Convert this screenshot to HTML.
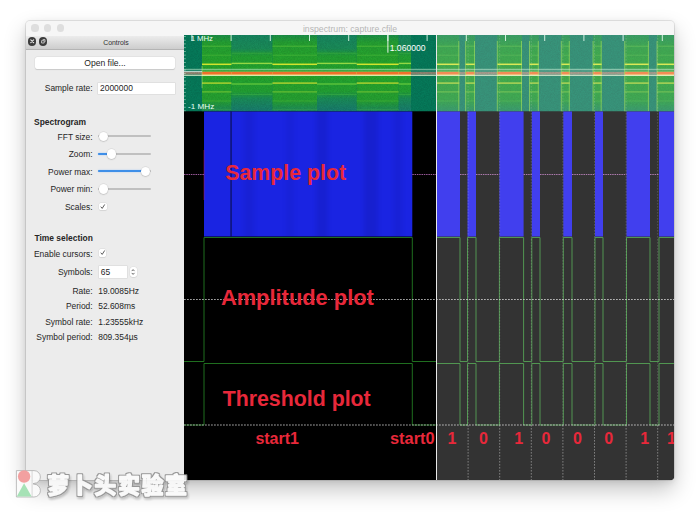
<!DOCTYPE html>
<html lang="zh"><head><meta charset="utf-8"><title>inspectrum: capture.cfile</title>
<style>
html,body{margin:0;padding:0;background:#fff;}
body{width:700px;height:512px;position:relative;overflow:hidden;font-family:"Liberation Sans","Noto Sans CJK SC",sans-serif;color:#262626;}
.win{position:absolute;left:26px;top:21px;width:648px;height:459px;border-radius:4px;background:#ececec;
 box-shadow:0 0 0 1px rgba(0,0,0,0.09),0 10px 22px rgba(0,0,0,0.23),0 2px 7px rgba(0,0,0,0.09);overflow:hidden;}
.tbar{position:absolute;left:0;top:0;width:648px;height:14.5px;background:#f6f6f6;border-bottom:0.5px solid #dcdcdc;}
.tl{position:absolute;top:3.4px;width:7.2px;height:7.2px;border-radius:50%;background:#dedede;}
.title{position:absolute;left:0;width:648px;top:2.7px;text-align:center;font-size:8.7px;line-height:10px;color:#b6b6b6;box-sizing:border-box;}
.dock{position:absolute;left:0;top:14.5px;width:158px;height:13.5px;background:linear-gradient(#ececec,#cdcdcd);border-bottom:0.5px solid #b4b4b4;}
.dock .t{position:absolute;left:0;width:180px;text-align:center;top:3.2px;font-size:6.9px;color:#303030;}
.db{position:absolute;top:1.9px;width:8.4px;height:8.4px;border-radius:50%;background:#3c3c3c;}
.plot{position:absolute;left:158px;top:14px;}
.lab{position:absolute;font-size:8.45px;white-space:nowrap;line-height:10px;}
.r{text-align:right;width:80px;left:-13.4px;}
.b{font-weight:bold;}
.btn{position:absolute;background:#fff;border-radius:2px;box-shadow:0 0 0 0.5px rgba(0,0,0,0.05),0 0.5px 1px rgba(0,0,0,0.13);}
.inp{position:absolute;background:#fff;box-shadow:0 0 0 0.5px rgba(0,0,0,0.10);}
.trk{position:absolute;left:72px;width:52.7px;height:2px;background:#c0c0c0;border-radius:1px;}
.trkb{position:absolute;left:72px;height:2px;background:#3f8fe8;border-radius:1px;box-shadow:0 0 1.5px rgba(80,160,255,0.6);}
.knob{position:absolute;width:9.4px;height:9.4px;border-radius:50%;background:#fff;box-shadow:0 0 0 0.4px rgba(0,0,0,0.08),0 0.5px 1.4px rgba(0,0,0,0.22);}
.chk{position:absolute;width:7.6px;height:7.6px;background:#fff;border-radius:1.6px;box-shadow:0 0 0 0.4px rgba(0,0,0,0.07),0 0.5px 1px rgba(0,0,0,0.12);}
.wm{position:absolute;left:0;top:460px;}
</style></head><body>
<div class="win">
<div class="tbar"><div class="tl" style="left:5.4px"></div><div class="tl" style="left:18px"></div><div class="tl" style="left:30.7px"></div><div class="title">inspectrum: capture.cfile</div></div>
<div class="dock"><div class="db" style="left:1.7px"><svg width="8.4" height="8.4" viewBox="0 0 78 78" style="position:absolute;left:0;top:0"><path d="M26 26 L52 52 M52 26 L26 52" stroke="#e6e6e6" stroke-width="11" stroke-linecap="round"/></svg></div><div class="db" style="left:13.1px"><svg width="8.4" height="8.4" viewBox="0 0 78 78" style="position:absolute;left:0;top:0"><path d="M24 34 h24 v22 h-24 z M34 24 h22 v22" fill="none" stroke="#e6e6e6" stroke-width="7"/></svg></div><div class="t">Controls</div></div>
<div class="btn" style="left:8.6px;top:35.8px;width:140.8px;height:12px;"></div>
<div class="lab " style="top:37.0px;left:8.6px;width:140.8px;text-align:center;font-size:8.6px;">Open file...</div>
<div class="lab r" style="top:62.3px;">Sample rate:</div>
<div class="inp" style="left:71.7px;top:61.6px;width:77.6px;height:11.4px;"></div>
<div class="lab " style="top:62.3px;left:74.0px;">2000000</div>
<div class="lab b" style="top:95.5px;left:8.0px;">Spectrogram</div>
<div class="lab r" style="top:110.6px;">FFT size:</div>
<div class="trk" style="top:114.2px"></div><div class="knob" style="left:72.5px;top:110.5px"></div>
<div class="lab r" style="top:128.3px;">Zoom:</div>
<div class="trk" style="top:131.9px"></div><div class="trkb" style="top:131.9px;width:13.6px"></div><div class="knob" style="left:80.9px;top:128.2px"></div>
<div class="lab r" style="top:145.8px;">Power max:</div>
<div class="trk" style="top:149.4px"></div><div class="trkb" style="top:149.4px;width:47.4px"></div><div class="knob" style="left:114.7px;top:145.7px"></div>
<div class="lab r" style="top:163.3px;">Power min:</div>
<div class="trk" style="top:166.9px"></div><div class="knob" style="left:72.5px;top:163.2px"></div>
<div class="lab r" style="top:181.0px;">Scales:</div>
<div class="chk" style="left:73.0px;top:181.6px;"><svg width="7.4" height="7.4" viewBox="0 0 74 74" style="position:absolute;left:0;top:0"><path d="M20 40 L32 54 L55 18" fill="none" stroke="#333" stroke-width="8" stroke-linecap="round" stroke-linejoin="round"/></svg></div>
<div class="lab b" style="top:212.3px;left:8.4px;">Time selection</div>
<div class="lab r" style="top:227.5px;">Enable cursors:</div>
<div class="chk" style="left:72.9px;top:228.4px;"><svg width="7.4" height="7.4" viewBox="0 0 74 74" style="position:absolute;left:0;top:0"><path d="M20 40 L32 54 L55 18" fill="none" stroke="#333" stroke-width="8" stroke-linecap="round" stroke-linejoin="round"/></svg></div>
<div class="lab r" style="top:246.0px;">Symbols:</div>
<div class="inp" style="left:72.7px;top:244.8px;width:28.6px;height:12px;"></div>
<div class="lab " style="top:246.0px;left:74.7px;">65</div>
<div class="btn" style="left:104.4px;top:246px;width:6.2px;height:10px;border-radius:2.5px"><svg width="6.2" height="10" viewBox="0 0 62 100" style="position:absolute;left:0;top:0"><path d="M20 38 L31 26 L42 38 M20 62 L31 74 L42 62" fill="none" stroke="#444" stroke-width="8" stroke-linecap="round" stroke-linejoin="round"/></svg></div>
<div class="lab r" style="top:265.0px;">Rate:</div>
<div class="lab " style="top:265.0px;left:72.2px;">19.0085Hz</div>
<div class="lab r" style="top:280.3px;">Period:</div>
<div class="lab " style="top:280.3px;left:72.2px;">52.608ms</div>
<div class="lab r" style="top:295.5px;">Symbol rate:</div>
<div class="lab " style="top:295.5px;left:72.2px;">1.23555kHz</div>
<div class="lab r" style="top:310.7px;">Symbol period:</div>
<div class="lab " style="top:310.7px;left:72.2px;">809.354µs</div>
<svg class="plot" width="490" height="445" viewBox="184 35 490 445">
<defs><filter id="bl" x="-50%" y="0" width="200%" height="100%"><feGaussianBlur stdDeviation="2.5 0"/></filter><linearGradient id="gb" x1="0" y1="0" x2="0" y2="1"><stop offset="0" stop-color="#1c9048"/><stop offset="0.1" stop-color="#25a032"/><stop offset="0.5" stop-color="#27a82a"/><stop offset="0.86" stop-color="#25a032"/><stop offset="1" stop-color="#1c8860"/></linearGradient><linearGradient id="gc" x1="0" y1="0" x2="0" y2="1"><stop offset="0" stop-color="#0a8840"/><stop offset="0.15" stop-color="#10952a"/><stop offset="0.5" stop-color="#149a20"/><stop offset="0.85" stop-color="#10952a"/><stop offset="1" stop-color="#0a8450"/></linearGradient><linearGradient id="gd" x1="0" y1="0" x2="0" y2="1"><stop offset="0" stop-color="#188660"/><stop offset="0.18" stop-color="#1a8c58"/><stop offset="0.27" stop-color="#22a034"/><stop offset="0.5" stop-color="#24a62c"/><stop offset="0.74" stop-color="#22a034"/><stop offset="0.83" stop-color="#1a8c58"/><stop offset="1" stop-color="#187c70"/></linearGradient><filter id="nz" x="0" y="0" width="100%" height="100%"><feTurbulence type="fractalNoise" baseFrequency="1.3" numOctaves="2" seed="3" result="t"/><feColorMatrix type="matrix" values="0 0 0 0 0  0 0 0 0 0  0 0 0 0 0  0.9 0 0 0 -0.25"/><feComposite in2="SourceGraphic" operator="in"/></filter></defs>
<rect x="184" y="35" width="490" height="445" fill="#000"/>
<rect x="184" y="35" width="490" height="76.5" fill="#067a5a"/>
<rect x="202" y="35" width="29.5" height="76.5" fill="url(#gb)"/>
<rect x="231.5" y="35" width="40.89999999999998" height="76.5" fill="url(#gd)"/>
<rect x="272.4" y="35" width="44.60000000000002" height="76.5" fill="url(#gb)"/>
<rect x="317" y="35" width="39.69999999999999" height="76.5" fill="url(#gd)"/>
<rect x="356.7" y="35" width="42.0" height="76.5" fill="url(#gb)"/>
<rect x="398.7" y="35" width="12.300000000000011" height="76.5" fill="url(#gd)"/>
<rect x="184" y="71.9" width="490" height="2.7" fill="#b08878" opacity="0.8"/>
<rect x="436.5" y="35" width="22.80000000000001" height="76.5" fill="url(#gc)"/>
<rect x="465.6" y="35" width="9.399999999999977" height="76.5" fill="url(#gc)"/>
<rect x="497.3" y="35" width="24.69999999999999" height="76.5" fill="url(#gc)"/>
<rect x="529.5" y="35" width="9.299999999999955" height="76.5" fill="url(#gc)"/>
<rect x="561.3" y="35" width="8.5" height="76.5" fill="url(#gc)"/>
<rect x="593" y="35" width="8.700000000000045" height="76.5" fill="url(#gc)"/>
<rect x="624.7" y="35" width="24.199999999999932" height="76.5" fill="url(#gc)"/>
<rect x="657" y="35" width="17" height="76.5" fill="url(#gc)"/>
<rect x="184" y="35" width="490" height="76.5" fill="#002030" filter="url(#nz)" opacity="0.22"/>
<rect x="202" y="45.70" width="29.5" height="1.0" fill="#5cc23c" opacity="0.7"/>
<rect x="202" y="54.70" width="29.5" height="1.0" fill="#4fba3a" opacity="0.6"/>
<rect x="202" y="63.55" width="29.5" height="1.5" fill="#d2e42e" opacity="1"/>
<rect x="202" y="82.40" width="29.5" height="1.4" fill="#b4d430" opacity="1"/>
<rect x="202" y="91.35" width="29.5" height="1.1" fill="#7fcc34" opacity="0.8"/>
<rect x="202" y="100.50" width="29.5" height="1.0" fill="#4fba3a" opacity="0.5"/>
<rect x="202" y="108.80" width="29.5" height="1.0" fill="#48b048" opacity="0.4"/>
<rect x="202" y="71.8" width="29.5" height="3.8" fill="#e6d84a"/>
<rect x="202" y="71.9" width="29.5" height="2.7" fill="#f0702c"/>
<rect x="231.5" y="52.70" width="40.89999999999998" height="1.0" fill="#46b440" opacity="0.5"/>
<rect x="231.5" y="62.70" width="40.89999999999998" height="1.4" fill="#94d844" opacity="1"/>
<rect x="231.5" y="83.35" width="40.89999999999998" height="1.3" fill="#62c83c" opacity="1"/>
<rect x="231.5" y="94.00" width="40.89999999999998" height="1.0" fill="#40b044" opacity="0.5"/>
<rect x="231.5" y="71.8" width="40.89999999999998" height="3.8" fill="#e6d84a"/>
<rect x="231.5" y="71.9" width="40.89999999999998" height="2.7" fill="#f0702c"/>
<rect x="272.4" y="45.70" width="44.60000000000002" height="1.0" fill="#5cc23c" opacity="0.7"/>
<rect x="272.4" y="54.70" width="44.60000000000002" height="1.0" fill="#4fba3a" opacity="0.6"/>
<rect x="272.4" y="63.55" width="44.60000000000002" height="1.5" fill="#d2e42e" opacity="1"/>
<rect x="272.4" y="82.40" width="44.60000000000002" height="1.4" fill="#b4d430" opacity="1"/>
<rect x="272.4" y="91.35" width="44.60000000000002" height="1.1" fill="#7fcc34" opacity="0.8"/>
<rect x="272.4" y="100.50" width="44.60000000000002" height="1.0" fill="#4fba3a" opacity="0.5"/>
<rect x="272.4" y="108.80" width="44.60000000000002" height="1.0" fill="#48b048" opacity="0.4"/>
<rect x="272.4" y="71.8" width="44.60000000000002" height="3.8" fill="#e6d84a"/>
<rect x="272.4" y="71.9" width="44.60000000000002" height="2.7" fill="#f0702c"/>
<rect x="317" y="52.70" width="39.69999999999999" height="1.0" fill="#46b440" opacity="0.5"/>
<rect x="317" y="62.70" width="39.69999999999999" height="1.4" fill="#94d844" opacity="1"/>
<rect x="317" y="83.35" width="39.69999999999999" height="1.3" fill="#62c83c" opacity="1"/>
<rect x="317" y="94.00" width="39.69999999999999" height="1.0" fill="#40b044" opacity="0.5"/>
<rect x="317" y="71.8" width="39.69999999999999" height="3.8" fill="#e6d84a"/>
<rect x="317" y="71.9" width="39.69999999999999" height="2.7" fill="#f0702c"/>
<rect x="356.7" y="45.70" width="42.0" height="1.0" fill="#5cc23c" opacity="0.7"/>
<rect x="356.7" y="54.70" width="42.0" height="1.0" fill="#4fba3a" opacity="0.6"/>
<rect x="356.7" y="63.55" width="42.0" height="1.5" fill="#d2e42e" opacity="1"/>
<rect x="356.7" y="82.40" width="42.0" height="1.4" fill="#b4d430" opacity="1"/>
<rect x="356.7" y="91.35" width="42.0" height="1.1" fill="#7fcc34" opacity="0.8"/>
<rect x="356.7" y="100.50" width="42.0" height="1.0" fill="#4fba3a" opacity="0.5"/>
<rect x="356.7" y="108.80" width="42.0" height="1.0" fill="#48b048" opacity="0.4"/>
<rect x="356.7" y="71.8" width="42.0" height="3.8" fill="#e6d84a"/>
<rect x="356.7" y="71.9" width="42.0" height="2.7" fill="#f0702c"/>
<rect x="398.7" y="52.70" width="12.300000000000011" height="1.0" fill="#46b440" opacity="0.5"/>
<rect x="398.7" y="62.70" width="12.300000000000011" height="1.4" fill="#94d844" opacity="1"/>
<rect x="398.7" y="83.35" width="12.300000000000011" height="1.3" fill="#62c83c" opacity="1"/>
<rect x="398.7" y="94.00" width="12.300000000000011" height="1.0" fill="#40b044" opacity="0.5"/>
<rect x="398.7" y="71.8" width="12.300000000000011" height="3.8" fill="#e6d84a"/>
<rect x="398.7" y="71.9" width="12.300000000000011" height="2.7" fill="#f0702c"/>
<rect x="436.5" y="45.70" width="22.80000000000001" height="1.0" fill="#5cc23c" opacity="0.5"/>
<rect x="436.5" y="54.70" width="22.80000000000001" height="1.0" fill="#4fba3a" opacity="0.4"/>
<rect x="436.5" y="63.55" width="22.80000000000001" height="1.5" fill="#d2e42e" opacity="1"/>
<rect x="436.5" y="82.40" width="22.80000000000001" height="1.4" fill="#b4d430" opacity="0.9"/>
<rect x="436.5" y="91.35" width="22.80000000000001" height="1.1" fill="#7fcc34" opacity="0.6"/>
<rect x="436.5" y="100.50" width="22.80000000000001" height="1.0" fill="#4fba3a" opacity="0.3"/>
<rect x="436.5" y="71.8" width="22.80000000000001" height="3.8" fill="#e6d84a"/>
<rect x="436.5" y="71.9" width="22.80000000000001" height="2.7" fill="#f0702c"/>
<rect x="465.6" y="45.70" width="9.399999999999977" height="1.0" fill="#5cc23c" opacity="0.5"/>
<rect x="465.6" y="54.70" width="9.399999999999977" height="1.0" fill="#4fba3a" opacity="0.4"/>
<rect x="465.6" y="63.55" width="9.399999999999977" height="1.5" fill="#d2e42e" opacity="1"/>
<rect x="465.6" y="82.40" width="9.399999999999977" height="1.4" fill="#b4d430" opacity="0.9"/>
<rect x="465.6" y="91.35" width="9.399999999999977" height="1.1" fill="#7fcc34" opacity="0.6"/>
<rect x="465.6" y="100.50" width="9.399999999999977" height="1.0" fill="#4fba3a" opacity="0.3"/>
<rect x="465.6" y="71.8" width="9.399999999999977" height="3.8" fill="#e6d84a"/>
<rect x="465.6" y="71.9" width="9.399999999999977" height="2.7" fill="#f0702c"/>
<rect x="497.3" y="45.70" width="24.69999999999999" height="1.0" fill="#5cc23c" opacity="0.5"/>
<rect x="497.3" y="54.70" width="24.69999999999999" height="1.0" fill="#4fba3a" opacity="0.4"/>
<rect x="497.3" y="63.55" width="24.69999999999999" height="1.5" fill="#d2e42e" opacity="1"/>
<rect x="497.3" y="82.40" width="24.69999999999999" height="1.4" fill="#b4d430" opacity="0.9"/>
<rect x="497.3" y="91.35" width="24.69999999999999" height="1.1" fill="#7fcc34" opacity="0.6"/>
<rect x="497.3" y="100.50" width="24.69999999999999" height="1.0" fill="#4fba3a" opacity="0.3"/>
<rect x="497.3" y="71.8" width="24.69999999999999" height="3.8" fill="#e6d84a"/>
<rect x="497.3" y="71.9" width="24.69999999999999" height="2.7" fill="#f0702c"/>
<rect x="529.5" y="45.70" width="9.299999999999955" height="1.0" fill="#5cc23c" opacity="0.5"/>
<rect x="529.5" y="54.70" width="9.299999999999955" height="1.0" fill="#4fba3a" opacity="0.4"/>
<rect x="529.5" y="63.55" width="9.299999999999955" height="1.5" fill="#d2e42e" opacity="1"/>
<rect x="529.5" y="82.40" width="9.299999999999955" height="1.4" fill="#b4d430" opacity="0.9"/>
<rect x="529.5" y="91.35" width="9.299999999999955" height="1.1" fill="#7fcc34" opacity="0.6"/>
<rect x="529.5" y="100.50" width="9.299999999999955" height="1.0" fill="#4fba3a" opacity="0.3"/>
<rect x="529.5" y="71.8" width="9.299999999999955" height="3.8" fill="#e6d84a"/>
<rect x="529.5" y="71.9" width="9.299999999999955" height="2.7" fill="#f0702c"/>
<rect x="561.3" y="45.70" width="8.5" height="1.0" fill="#5cc23c" opacity="0.5"/>
<rect x="561.3" y="54.70" width="8.5" height="1.0" fill="#4fba3a" opacity="0.4"/>
<rect x="561.3" y="63.55" width="8.5" height="1.5" fill="#d2e42e" opacity="1"/>
<rect x="561.3" y="82.40" width="8.5" height="1.4" fill="#b4d430" opacity="0.9"/>
<rect x="561.3" y="91.35" width="8.5" height="1.1" fill="#7fcc34" opacity="0.6"/>
<rect x="561.3" y="100.50" width="8.5" height="1.0" fill="#4fba3a" opacity="0.3"/>
<rect x="561.3" y="71.8" width="8.5" height="3.8" fill="#e6d84a"/>
<rect x="561.3" y="71.9" width="8.5" height="2.7" fill="#f0702c"/>
<rect x="593" y="45.70" width="8.700000000000045" height="1.0" fill="#5cc23c" opacity="0.5"/>
<rect x="593" y="54.70" width="8.700000000000045" height="1.0" fill="#4fba3a" opacity="0.4"/>
<rect x="593" y="63.55" width="8.700000000000045" height="1.5" fill="#d2e42e" opacity="1"/>
<rect x="593" y="82.40" width="8.700000000000045" height="1.4" fill="#b4d430" opacity="0.9"/>
<rect x="593" y="91.35" width="8.700000000000045" height="1.1" fill="#7fcc34" opacity="0.6"/>
<rect x="593" y="100.50" width="8.700000000000045" height="1.0" fill="#4fba3a" opacity="0.3"/>
<rect x="593" y="71.8" width="8.700000000000045" height="3.8" fill="#e6d84a"/>
<rect x="593" y="71.9" width="8.700000000000045" height="2.7" fill="#f0702c"/>
<rect x="624.7" y="45.70" width="24.199999999999932" height="1.0" fill="#5cc23c" opacity="0.5"/>
<rect x="624.7" y="54.70" width="24.199999999999932" height="1.0" fill="#4fba3a" opacity="0.4"/>
<rect x="624.7" y="63.55" width="24.199999999999932" height="1.5" fill="#d2e42e" opacity="1"/>
<rect x="624.7" y="82.40" width="24.199999999999932" height="1.4" fill="#b4d430" opacity="0.9"/>
<rect x="624.7" y="91.35" width="24.199999999999932" height="1.1" fill="#7fcc34" opacity="0.6"/>
<rect x="624.7" y="100.50" width="24.199999999999932" height="1.0" fill="#4fba3a" opacity="0.3"/>
<rect x="624.7" y="71.8" width="24.199999999999932" height="3.8" fill="#e6d84a"/>
<rect x="624.7" y="71.9" width="24.199999999999932" height="2.7" fill="#f0702c"/>
<rect x="657" y="45.70" width="17" height="1.0" fill="#5cc23c" opacity="0.5"/>
<rect x="657" y="54.70" width="17" height="1.0" fill="#4fba3a" opacity="0.4"/>
<rect x="657" y="63.55" width="17" height="1.5" fill="#d2e42e" opacity="1"/>
<rect x="657" y="82.40" width="17" height="1.4" fill="#b4d430" opacity="0.9"/>
<rect x="657" y="91.35" width="17" height="1.1" fill="#7fcc34" opacity="0.6"/>
<rect x="657" y="100.50" width="17" height="1.0" fill="#4fba3a" opacity="0.3"/>
<rect x="657" y="71.8" width="17" height="3.8" fill="#e6d84a"/>
<rect x="657" y="71.9" width="17" height="2.7" fill="#f0702c"/>
<rect x="436.0" y="41" width="1" height="70.5" fill="#8fd83a" opacity="0.6"/>
<rect x="458.3" y="41" width="1" height="70.5" fill="#8fd83a" opacity="0.6"/>
<rect x="465.1" y="41" width="1" height="70.5" fill="#8fd83a" opacity="0.6"/>
<rect x="474" y="41" width="1" height="70.5" fill="#8fd83a" opacity="0.6"/>
<rect x="496.8" y="41" width="1" height="70.5" fill="#8fd83a" opacity="0.6"/>
<rect x="521" y="41" width="1" height="70.5" fill="#8fd83a" opacity="0.6"/>
<rect x="529.0" y="41" width="1" height="70.5" fill="#8fd83a" opacity="0.6"/>
<rect x="537.8" y="41" width="1" height="70.5" fill="#8fd83a" opacity="0.6"/>
<rect x="560.8" y="41" width="1" height="70.5" fill="#8fd83a" opacity="0.6"/>
<rect x="568.8" y="41" width="1" height="70.5" fill="#8fd83a" opacity="0.6"/>
<rect x="592.5" y="41" width="1" height="70.5" fill="#8fd83a" opacity="0.6"/>
<rect x="600.7" y="41" width="1" height="70.5" fill="#8fd83a" opacity="0.6"/>
<rect x="624.2" y="41" width="1" height="70.5" fill="#8fd83a" opacity="0.6"/>
<rect x="647.9" y="41" width="1" height="70.5" fill="#8fd83a" opacity="0.6"/>
<rect x="656.5" y="41" width="1" height="70.5" fill="#8fd83a" opacity="0.6"/>
<rect x="184" y="69.4" width="490" height="2.4" fill="#fff" opacity="0.12"/>
<rect x="184" y="68.8" width="490" height="1" fill="#c8f0d0" opacity="0.6"/>
<rect x="201.6" y="66" width="0.9" height="22" fill="#b8e878" opacity="0.6"/>
<rect x="184" y="74.8" width="490" height="1" fill="#f0f8d8" opacity="0.9"/>
<rect x="184" y="71.2" width="18" height="0.9" fill="#fff" opacity="0.8"/>
<rect x="191.4" y="35" width="1" height="6" fill="#e8fff0" opacity="0.85"/>
<rect x="230.6" y="35" width="1" height="6" fill="#e8fff0" opacity="0.85"/>
<rect x="269.8" y="35" width="1" height="6" fill="#e8fff0" opacity="0.85"/>
<rect x="309.0" y="35" width="1" height="6" fill="#e8fff0" opacity="0.85"/>
<rect x="348.2" y="35" width="1" height="6" fill="#e8fff0" opacity="0.85"/>
<rect x="387.4" y="35" width="1" height="6" fill="#e8fff0" opacity="0.85"/>
<rect x="426.6" y="35" width="1" height="6" fill="#e8fff0" opacity="0.85"/>
<rect x="465.8" y="35" width="1" height="6" fill="#e8fff0" opacity="0.85"/>
<rect x="505.0" y="35" width="1" height="6" fill="#e8fff0" opacity="0.85"/>
<rect x="544.2" y="35" width="1" height="6" fill="#e8fff0" opacity="0.85"/>
<rect x="583.4" y="35" width="1" height="6" fill="#e8fff0" opacity="0.85"/>
<rect x="622.6" y="35" width="1" height="6" fill="#e8fff0" opacity="0.85"/>
<rect x="661.8" y="35" width="1" height="6" fill="#e8fff0" opacity="0.85"/>
<rect x="387.4" y="35" width="1" height="17.7" fill="#fff" opacity="0.9"/>
<rect x="184" y="36.1" width="1.8" height="0.8" fill="#e0fff0" opacity="0.6"/>
<rect x="184" y="39.8" width="1.8" height="0.8" fill="#e0fff0" opacity="0.6"/>
<rect x="184" y="43.5" width="1.8" height="0.8" fill="#e0fff0" opacity="0.6"/>
<rect x="184" y="47.3" width="1.8" height="0.8" fill="#e0fff0" opacity="0.6"/>
<rect x="184" y="51.0" width="1.8" height="0.8" fill="#e0fff0" opacity="0.6"/>
<rect x="184" y="54.7" width="1.8" height="0.8" fill="#e0fff0" opacity="0.6"/>
<rect x="184" y="58.4" width="1.8" height="0.8" fill="#e0fff0" opacity="0.6"/>
<rect x="184" y="62.1" width="1.8" height="0.8" fill="#e0fff0" opacity="0.6"/>
<rect x="184" y="65.9" width="1.8" height="0.8" fill="#e0fff0" opacity="0.6"/>
<rect x="184" y="69.6" width="1.8" height="0.8" fill="#e0fff0" opacity="0.6"/>
<rect x="184" y="73.3" width="1.8" height="0.8" fill="#e0fff0" opacity="0.6"/>
<rect x="184" y="77.0" width="1.8" height="0.8" fill="#e0fff0" opacity="0.6"/>
<rect x="184" y="80.7" width="1.8" height="0.8" fill="#e0fff0" opacity="0.6"/>
<rect x="184" y="84.5" width="1.8" height="0.8" fill="#e0fff0" opacity="0.6"/>
<rect x="184" y="88.2" width="1.8" height="0.8" fill="#e0fff0" opacity="0.6"/>
<rect x="184" y="91.9" width="1.8" height="0.8" fill="#e0fff0" opacity="0.6"/>
<rect x="184" y="95.6" width="1.8" height="0.8" fill="#e0fff0" opacity="0.6"/>
<rect x="184" y="99.3" width="1.8" height="0.8" fill="#e0fff0" opacity="0.6"/>
<rect x="184" y="103.1" width="1.8" height="0.8" fill="#e0fff0" opacity="0.6"/>
<rect x="184" y="106.8" width="1.8" height="0.8" fill="#e0fff0" opacity="0.6"/>
<rect x="184" y="110.5" width="1.8" height="0.8" fill="#e0fff0" opacity="0.6"/>
<text x="190.7" y="41.2" font-size="8" fill="#eafff4" font-family="Liberation Sans, sans-serif" textLength="22.3" lengthAdjust="spacingAndGlyphs">1 MHz</text>
<text x="188.1" y="108.7" font-size="8" fill="#eafff4" font-family="Liberation Sans, sans-serif" textLength="26.2" lengthAdjust="spacingAndGlyphs">-1 MHz</text>
<text x="389.7" y="51" font-size="8.2" fill="#fff" font-family="Liberation Sans, sans-serif" textLength="35.9" lengthAdjust="spacingAndGlyphs">1.060000</text>
<rect x="184" y="111.5" width="490" height="368.5" fill="#000"/>
<rect x="204" y="111.5" width="208.3" height="125.0" fill="#1a24e2"/>
<rect x="244" y="111.5" width="10" height="125.0" fill="#000030" opacity="0.07" filter="url(#bl)"/>
<rect x="316" y="111.5" width="12" height="125.0" fill="#000030" opacity="0.09" filter="url(#bl)"/>
<rect x="364" y="111.5" width="14" height="125.0" fill="#000030" opacity="0.1" filter="url(#bl)"/>
<rect x="394" y="111.5" width="8" height="125.0" fill="#000030" opacity="0.07" filter="url(#bl)"/>
<rect x="286" y="111.5" width="8" height="125.0" fill="#000030" opacity="0.05" filter="url(#bl)"/>
<rect x="230.6" y="111.5" width="0.9" height="125.0" fill="#05082a"/>
<rect x="203.6" y="150" width="0.8" height="50" fill="#c02050" opacity="0.6"/>
<rect x="436.5" y="111.5" width="23.5" height="125.0" fill="#1210ea"/>
<rect x="467.5" y="111.5" width="8.5" height="125.0" fill="#1210ea"/>
<rect x="499.4" y="111.5" width="24.200000000000045" height="125.0" fill="#1210ea"/>
<rect x="531.8" y="111.5" width="8.200000000000045" height="125.0" fill="#1210ea"/>
<rect x="563.3" y="111.5" width="8.700000000000045" height="125.0" fill="#1210ea"/>
<rect x="595" y="111.5" width="8" height="125.0" fill="#1210ea"/>
<rect x="626.5" y="111.5" width="23.5" height="125.0" fill="#1210ea"/>
<rect x="659" y="111.5" width="15" height="125.0" fill="#1210ea"/>
<path d="M184,174.5 H204" stroke="#c070c0" stroke-width="1" stroke-dasharray="1.5 0.8" opacity="0.8"/>
<path d="M412.3,174.5 H436.5" stroke="#c070c0" stroke-width="1" stroke-dasharray="1.5 0.8" opacity="0.8"/>
<path d="M460,174.5 H467.5" stroke="#c070c0" stroke-width="1" stroke-dasharray="1.5 0.8" opacity="0.8"/>
<path d="M476,174.5 H499.4" stroke="#c070c0" stroke-width="1" stroke-dasharray="1.5 0.8" opacity="0.8"/>
<path d="M523.6,174.5 H531.8" stroke="#c070c0" stroke-width="1" stroke-dasharray="1.5 0.8" opacity="0.8"/>
<path d="M540,174.5 H563.3" stroke="#c070c0" stroke-width="1" stroke-dasharray="1.5 0.8" opacity="0.8"/>
<path d="M572,174.5 H595" stroke="#c070c0" stroke-width="1" stroke-dasharray="1.5 0.8" opacity="0.8"/>
<path d="M603,174.5 H626.5" stroke="#c070c0" stroke-width="1" stroke-dasharray="1.5 0.8" opacity="0.8"/>
<path d="M650,174.5 H659" stroke="#c070c0" stroke-width="1" stroke-dasharray="1.5 0.8" opacity="0.8"/>
<path d="M184,361.5 L204,361.5 L204,237.5 L412.3,237.5 L412.3,361.5 L436.5,361.5" fill="none" stroke="#237a23" stroke-width="0.9"/>
<path d="M436.5,361.5 L436.5,361.5 L436.5,237.5 L460,237.5 L460,361.5 L467.5,361.5 L467.5,237.5 L476,237.5 L476,361.5 L499.4,361.5 L499.4,237.5 L523.6,237.5 L523.6,361.5 L531.8,361.5 L531.8,237.5 L540,237.5 L540,361.5 L563.3,361.5 L563.3,237.5 L572,237.5 L572,361.5 L595,361.5 L595,237.5 L603,237.5 L603,361.5 L626.5,361.5 L626.5,237.5 L650,237.5 L650,361.5 L659,361.5 L659,237.5 L674,237.5" fill="none" stroke="#2a8a2a" stroke-width="0.9"/>
<path d="M184,425 L204,425 L204,363.5 L412.3,363.5 L412.3,425 L436.5,425" fill="none" stroke="#237a23" stroke-width="0.9"/>
<path d="M436.5,425 L436.5,425 L436.5,363.5 L460,363.5 L460,425 L467.5,425 L467.5,363.5 L476,363.5 L476,425 L499.4,425 L499.4,363.5 L523.6,363.5 L523.6,425 L531.8,425 L531.8,363.5 L540,363.5 L540,425 L563.3,425 L563.3,363.5 L572,363.5 L572,425 L595,425 L595,363.5 L603,363.5 L603,425 L626.5,425 L626.5,363.5 L650,363.5 L650,425 L659,425 L659,363.5 L674,363.5" fill="none" stroke="#2a8a2a" stroke-width="0.9"/>
<path d="M184,299.5 H674" stroke="#c8c8c8" stroke-width="0.8" stroke-dasharray="1.8 1.2"/>
<path d="M184,425 H674" stroke="#c8c8c8" stroke-width="0.8" stroke-dasharray="1.8 1.2"/>
<rect x="436.5" y="35" width="237.5" height="445" fill="#fff" opacity="0.2"/>
<rect x="436.0" y="35" width="1" height="445" fill="#e8e8e8"/>
<path d="M468.1,35 V425" stroke="#d8d8d8" stroke-width="0.7" stroke-dasharray="1.6 1.4" opacity="0.3"/>
<path d="M468.1,425 V480" stroke="#d0d0d0" stroke-width="0.7" stroke-dasharray="1.6 1.4" opacity="0.7"/>
<path d="M499.7,35 V425" stroke="#d8d8d8" stroke-width="0.7" stroke-dasharray="1.6 1.4" opacity="0.3"/>
<path d="M499.7,425 V480" stroke="#d0d0d0" stroke-width="0.7" stroke-dasharray="1.6 1.4" opacity="0.7"/>
<path d="M531.3,35 V425" stroke="#d8d8d8" stroke-width="0.7" stroke-dasharray="1.6 1.4" opacity="0.3"/>
<path d="M531.3,425 V480" stroke="#d0d0d0" stroke-width="0.7" stroke-dasharray="1.6 1.4" opacity="0.7"/>
<path d="M562.9,35 V425" stroke="#d8d8d8" stroke-width="0.7" stroke-dasharray="1.6 1.4" opacity="0.3"/>
<path d="M562.9,425 V480" stroke="#d0d0d0" stroke-width="0.7" stroke-dasharray="1.6 1.4" opacity="0.7"/>
<path d="M594.5,35 V425" stroke="#d8d8d8" stroke-width="0.7" stroke-dasharray="1.6 1.4" opacity="0.3"/>
<path d="M594.5,425 V480" stroke="#d0d0d0" stroke-width="0.7" stroke-dasharray="1.6 1.4" opacity="0.7"/>
<path d="M626.1,35 V425" stroke="#d8d8d8" stroke-width="0.7" stroke-dasharray="1.6 1.4" opacity="0.3"/>
<path d="M626.1,425 V480" stroke="#d0d0d0" stroke-width="0.7" stroke-dasharray="1.6 1.4" opacity="0.7"/>
<path d="M657.7,35 V425" stroke="#d8d8d8" stroke-width="0.7" stroke-dasharray="1.6 1.4" opacity="0.3"/>
<path d="M657.7,425 V480" stroke="#d0d0d0" stroke-width="0.7" stroke-dasharray="1.6 1.4" opacity="0.7"/>
<path d="M689.3,35 V425" stroke="#d8d8d8" stroke-width="0.7" stroke-dasharray="1.6 1.4" opacity="0.3"/>
<path d="M689.3,425 V480" stroke="#d0d0d0" stroke-width="0.7" stroke-dasharray="1.6 1.4" opacity="0.7"/>
<text x="225.3" y="180" font-size="21.5" fill="#e8283a" font-family="Liberation Sans, sans-serif" font-weight="bold" textLength="120.7" lengthAdjust="spacingAndGlyphs">Sample plot</text>
<text x="220.9" y="305" font-size="21.5" fill="#e8283a" font-family="Liberation Sans, sans-serif" font-weight="bold" textLength="153" lengthAdjust="spacingAndGlyphs">Amplitude plot</text>
<text x="222.7" y="405.6" font-size="21.5" fill="#e8283a" font-family="Liberation Sans, sans-serif" font-weight="bold" textLength="148" lengthAdjust="spacingAndGlyphs">Threshold plot</text>
<text x="255.4" y="443.7" font-size="16" fill="#e8283a" font-family="Liberation Sans, sans-serif" font-weight="bold" textLength="43.6" lengthAdjust="spacingAndGlyphs">start1</text>
<text x="390" y="443.7" font-size="16" fill="#e8283a" font-family="Liberation Sans, sans-serif" font-weight="bold" textLength="44.6" lengthAdjust="spacingAndGlyphs">start0</text>
<text x="451.9" y="443.7" font-size="16" fill="#e8283a" font-family="Liberation Sans, sans-serif" font-weight="bold" text-anchor="middle">1</text>
<text x="483.5" y="443.7" font-size="16" fill="#e8283a" font-family="Liberation Sans, sans-serif" font-weight="bold" text-anchor="middle">0</text>
<text x="518.8" y="443.7" font-size="16" fill="#e8283a" font-family="Liberation Sans, sans-serif" font-weight="bold" text-anchor="middle">1</text>
<text x="546" y="443.7" font-size="16" fill="#e8283a" font-family="Liberation Sans, sans-serif" font-weight="bold" text-anchor="middle">0</text>
<text x="577.5" y="443.7" font-size="16" fill="#e8283a" font-family="Liberation Sans, sans-serif" font-weight="bold" text-anchor="middle">0</text>
<text x="608.7" y="443.7" font-size="16" fill="#e8283a" font-family="Liberation Sans, sans-serif" font-weight="bold" text-anchor="middle">0</text>
<text x="644.8" y="443.7" font-size="16" fill="#e8283a" font-family="Liberation Sans, sans-serif" font-weight="bold" text-anchor="middle">1</text>
<text x="671.5" y="443.7" font-size="16" fill="#e8283a" font-family="Liberation Sans, sans-serif" font-weight="bold" text-anchor="middle">1</text>
</svg>
</div>
<svg style="position:absolute;left:14px;top:468px" width="30" height="32" viewBox="14 468 30 32">
<path d="M16.4 470.6 H34 A6.4 6.4 0 0 1 34 483.4 L33 483.8 L34 484.2 A6.4 6.4 0 0 1 34 497 H16.4 Z" fill="#fcfcfc" stroke="#9c9c9c" stroke-width="0.7" opacity="0.9"/>
<path d="M32.1 470.6 V497" stroke="#b0b0b0" stroke-width="0.6" opacity="0.8"/>
<circle cx="24.1" cy="476.5" r="6.2" fill="#f2a0a0"/>
<path d="M24.1 483.2 L31.6 496.6 H16.8 Z" fill="#a6e2b6"/>
</svg>
<svg class="wm" width="200" height="52" viewBox="0 460 200 52"><defs><filter id="wmf" x="-5%" y="-30%" width="110%" height="160%"><feMorphology in="SourceAlpha" operator="dilate" radius="0.7" result="o"/><feGaussianBlur in="o" stdDeviation="0.25" result="ob"/><feFlood flood-color="#909090"/><feComposite in2="ob" operator="in" result="o1"/><feOffset in="ob" dx="1.2" dy="1.8"/><feGaussianBlur stdDeviation="1.2"/><feComponentTransfer result="sh"><feFuncA type="linear" slope="0.22"/></feComponentTransfer><feMerge><feMergeNode in="sh"/><feMergeNode in="o1"/><feMergeNode in="SourceGraphic"/></feMerge></filter></defs><text x="47.4" y="493" font-size="21.6" font-weight="bold" letter-spacing="2" fill="#fcfcfc" stroke="#fcfcfc" stroke-width="1.6" stroke-linejoin="round" filter="url(#wmf)" opacity="0.9" font-family="Noto Sans CJK SC, WenQuanYi Zen Hei, sans-serif">萝卜头实验室</text></svg>
</body></html>
